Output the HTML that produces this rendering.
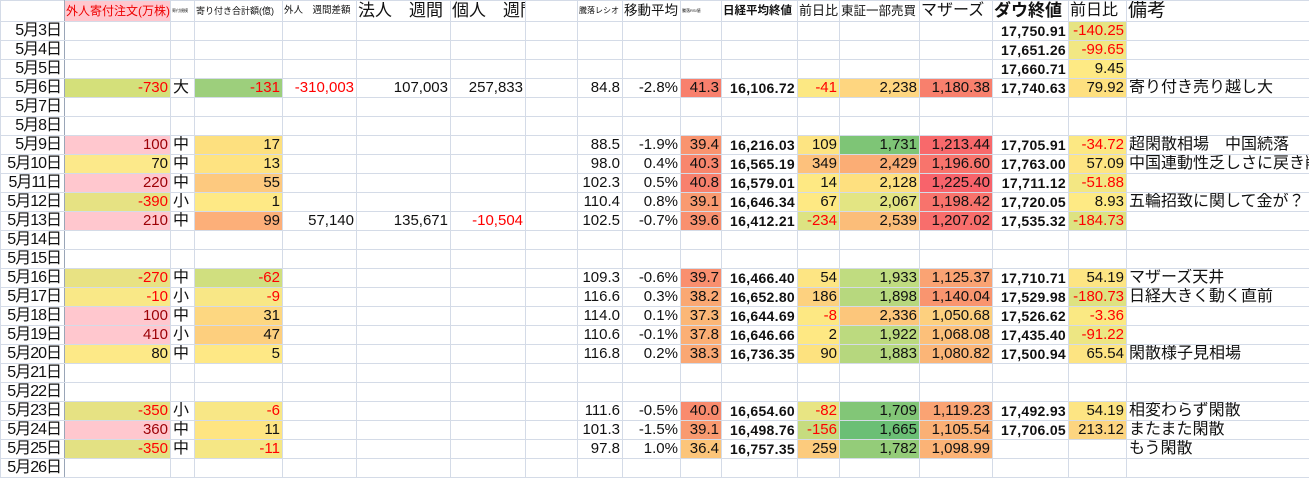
<!DOCTYPE html>
<html><head><meta charset="utf-8"><style>
body{margin:0;background:#fff;width:1309px;height:473px;overflow:hidden;font-family:"Liberation Sans","Noto Sans CJK JP",sans-serif;}
table{border-collapse:collapse;table-layout:fixed;width:1309px;}
td{border:1px solid #d4dbe7;padding:0 2px;height:18px;line-height:18px;font-size:15px;white-space:nowrap;overflow:hidden;text-align:right;color:#111;}
tr.h td{height:20px;text-align:left;font-size:12px;padding:0 1px;}
td.dt{border-right:1px solid #9aa6b8;font-size:16px;letter-spacing:-1px;padding-right:3px;}
.r{color:#f00}.d{color:#9c0006}.b{font-weight:bold;font-size:14px;letter-spacing:0.3px}
td.l{text-align:left;font-size:16px}
td.c{text-align:left;font-size:16px;padding-left:2px}
</style></head><body>
<table>
<colgroup><col style="width:64px"><col style="width:106px"><col style="width:24px"><col style="width:88px"><col style="width:74px"><col style="width:94px"><col style="width:75px"><col style="width:52px"><col style="width:45px"><col style="width:58px"><col style="width:41px"><col style="width:76px"><col style="width:42px"><col style="width:80px"><col style="width:73px"><col style="width:76px"><col style="width:58px"><col style="width:183px"></colgroup>
<tr class="h"><td class="dt"></td><td style="background:#ffc7ce;color:#e00">外人寄付注文(万株)</td><td style="font-size:4px">寄付規模</td><td style="font-size:9px">寄り付き合計額(億)</td><td style="font-size:9.5px">外人　週間差額</td><td style="font-size:17px">法人　週間</td><td style="font-size:17px">個人　週間</td><td></td><td style="font-size:8px">騰落レシオ</td><td style="font-size:13.5px">移動平均</td><td style="font-size:4px">騰落RSI値</td><td style="font-size:11.5px;font-weight:bold">日経平均終値</td><td style="font-size:13px">前日比</td><td style="font-size:12.5px">東証一部売買</td><td style="font-size:16px">マザーズ</td><td style="font-size:17px;font-weight:bold">ダウ終値</td><td style="font-size:16px">前日比</td><td style="font-size:19px">備考</td></tr>
<tr><td class="dt">5月3日</td><td></td><td></td><td></td><td></td><td></td><td></td><td></td><td></td><td></td><td></td><td></td><td></td><td></td><td></td><td class="b">17,750.91</td><td class="r" style="background:#e6e483">-140.25</td><td></td></tr>
<tr><td class="dt">5月4日</td><td></td><td></td><td></td><td></td><td></td><td></td><td></td><td></td><td></td><td></td><td></td><td></td><td></td><td></td><td class="b">17,651.26</td><td class="r" style="background:#f2e783">-99.65</td><td></td></tr>
<tr><td class="dt">5月5日</td><td></td><td></td><td></td><td></td><td></td><td></td><td></td><td></td><td></td><td></td><td></td><td></td><td></td><td></td><td class="b">17,660.71</td><td style="background:#feea84">9.45</td><td></td></tr>
<tr><td class="dt">5月6日</td><td class="r" style="background:#d4e07a">-730</td><td class="c">大</td><td class="r" style="background:#9dcf7c">-131</td><td class="r">-310,003</td><td>107,003</td><td>257,833</td><td></td><td>84.8</td><td>-2.8%</td><td style="background:#f8806d">41.3</td><td class="b">16,106.72</td><td class="r" style="background:#fce883">-41</td><td style="background:#fed680">2,238</td><td style="background:#f8806d">1,180.38</td><td class="b">17,740.63</td><td style="background:#fee07f">79.92</td><td class="l">寄り付き売り越し大</td></tr>
<tr><td class="dt">5月7日</td><td></td><td></td><td></td><td></td><td></td><td></td><td></td><td></td><td></td><td></td><td></td><td></td><td></td><td></td><td></td><td></td><td></td></tr>
<tr><td class="dt">5月8日</td><td></td><td></td><td></td><td></td><td></td><td></td><td></td><td></td><td></td><td></td><td></td><td></td><td></td><td></td><td></td><td></td><td></td></tr>
<tr><td class="dt">5月9日</td><td class="d" style="background:#ffc7ce">100</td><td class="c">中</td><td style="background:#fde07f">17</td><td></td><td></td><td></td><td></td><td>88.5</td><td>-1.9%</td><td style="background:#f9946f">39.4</td><td class="b">16,216.03</td><td style="background:#fde482">109</td><td style="background:#7ec576">1,731</td><td style="background:#f8696b">1,213.44</td><td class="b">17,705.91</td><td class="r" style="background:#fce883">-34.72</td><td class="l">超閑散相場　中国続落</td></tr>
<tr><td class="dt">5月10日</td><td style="background:#fce98a">70</td><td class="c">中</td><td style="background:#fee381">13</td><td></td><td></td><td></td><td></td><td>98.0</td><td>0.4%</td><td style="background:#f8866d">40.3</td><td class="b">16,565.19</td><td style="background:#fdc17c">349</td><td style="background:#fbad75">2,429</td><td style="background:#f8746c">1,196.60</td><td class="b">17,763.00</td><td style="background:#fee583">57.09</td><td class="l">中国連動性乏しさに戻き削除</td></tr>
<tr><td class="dt">5月11日</td><td class="d" style="background:#ffc7ce">220</td><td class="c">中</td><td style="background:#fdc97f">55</td><td></td><td></td><td></td><td></td><td>102.3</td><td>0.5%</td><td style="background:#f8806d">40.8</td><td class="b">16,579.01</td><td style="background:#fee983">14</td><td style="background:#fee07f">2,128</td><td style="background:#f8636b">1,225.40</td><td class="b">17,711.12</td><td class="r" style="background:#f3e783">-51.88</td><td></td></tr>
<tr><td class="dt">5月12日</td><td class="r" style="background:#e6e283">-390</td><td class="c">小</td><td style="background:#fee985">1</td><td></td><td></td><td></td><td></td><td>110.4</td><td>0.8%</td><td style="background:#f99a70">39.1</td><td class="b">16,646.34</td><td style="background:#fee983">67</td><td style="background:#e3e583">2,067</td><td style="background:#f8736c">1,198.42</td><td class="b">17,720.05</td><td style="background:#feea84">8.93</td><td class="l">五輪招致に関して金が？</td></tr>
<tr><td class="dt">5月13日</td><td class="d" style="background:#ffc7ce">210</td><td class="c">中</td><td style="background:#fcaf79">99</td><td>57,140</td><td>135,671</td><td class="r">-10,504</td><td></td><td>102.5</td><td>-0.7%</td><td style="background:#f9906f">39.6</td><td class="b">16,412.21</td><td class="r" style="background:#dde382">-234</td><td style="background:#fbbd79">2,539</td><td style="background:#f86e6c">1,207.02</td><td class="b">17,535.32</td><td class="r" style="background:#dde281">-184.73</td><td></td></tr>
<tr><td class="dt">5月14日</td><td></td><td></td><td></td><td></td><td></td><td></td><td></td><td></td><td></td><td></td><td></td><td></td><td></td><td></td><td></td><td></td><td></td></tr>
<tr><td class="dt">5月15日</td><td></td><td></td><td></td><td></td><td></td><td></td><td></td><td></td><td></td><td></td><td></td><td></td><td></td><td></td><td></td><td></td><td></td></tr>
<tr><td class="dt">5月16日</td><td class="r" style="background:#e8e283">-270</td><td class="c">中</td><td class="r" style="background:#d0df7f">-62</td><td></td><td></td><td></td><td></td><td>109.3</td><td>-0.6%</td><td style="background:#f98f6f">39.7</td><td class="b">16,466.40</td><td style="background:#fde583">54</td><td style="background:#c0dc80">1,933</td><td style="background:#faa373">1,125.37</td><td class="b">17,710.71</td><td style="background:#fde583">54.19</td><td class="l">マザーズ天井</td></tr>
<tr><td class="dt">5月17日</td><td class="r" style="background:#f9e887">-10</td><td class="c">小</td><td class="r" style="background:#f8e786">-9</td><td></td><td></td><td></td><td></td><td>116.6</td><td>0.3%</td><td style="background:#faa873">38.2</td><td class="b">16,652.80</td><td style="background:#fdd17f">186</td><td style="background:#b7d87e">1,898</td><td style="background:#f9956f">1,140.04</td><td class="b">17,529.98</td><td class="r" style="background:#dee281">-180.73</td><td class="l">日経大きく動く直前</td></tr>
<tr><td class="dt">5月18日</td><td class="d" style="background:#ffc7ce">100</td><td class="c">中</td><td style="background:#fdd781">31</td><td></td><td></td><td></td><td></td><td>114.0</td><td>0.1%</td><td style="background:#fbb777">37.3</td><td class="b">16,644.69</td><td class="r" style="background:#fde883">-8</td><td style="background:#fcc67b">2,336</td><td style="background:#fdd07f">1,050.68</td><td class="b">17,526.62</td><td class="r" style="background:#fae983">-3.36</td><td></td></tr>
<tr><td class="dt">5月19日</td><td class="d" style="background:#ffc7ce">410</td><td class="c">小</td><td style="background:#fdcf7e">47</td><td></td><td></td><td></td><td></td><td>110.6</td><td>-0.1%</td><td style="background:#fbaf75">37.8</td><td class="b">16,646.66</td><td style="background:#fee883">2</td><td style="background:#bcda7f">1,922</td><td style="background:#fcc07a">1,068.08</td><td class="b">17,435.40</td><td class="r" style="background:#ede683">-91.22</td><td></td></tr>
<tr><td class="dt">5月20日</td><td style="background:#fde987">80</td><td class="c">中</td><td style="background:#fee885">5</td><td></td><td></td><td></td><td></td><td>116.8</td><td>0.2%</td><td style="background:#faa773">38.3</td><td class="b">16,736.35</td><td style="background:#fde27f">90</td><td style="background:#b6d77e">1,883</td><td style="background:#fbb577">1,080.82</td><td class="b">17,500.94</td><td style="background:#fde482">65.54</td><td class="l">閑散様子見相場</td></tr>
<tr><td class="dt">5月21日</td><td></td><td></td><td></td><td></td><td></td><td></td><td></td><td></td><td></td><td></td><td></td><td></td><td></td><td></td><td></td><td></td><td></td></tr>
<tr><td class="dt">5月22日</td><td></td><td></td><td></td><td></td><td></td><td></td><td></td><td></td><td></td><td></td><td></td><td></td><td></td><td></td><td></td><td></td><td></td></tr>
<tr><td class="dt">5月23日</td><td class="r" style="background:#e6e283">-350</td><td class="c">小</td><td class="r" style="background:#f8e786">-6</td><td></td><td></td><td></td><td></td><td>111.6</td><td>-0.5%</td><td style="background:#f98b6e">40.0</td><td class="b">16,654.60</td><td class="r" style="background:#e8e583">-82</td><td style="background:#82c677">1,709</td><td style="background:#faa373">1,119.23</td><td class="b">17,492.93</td><td style="background:#fde583">54.19</td><td class="l">相変わらず閑散</td></tr>
<tr><td class="dt">5月24日</td><td class="d" style="background:#ffc7ce">360</td><td class="c">中</td><td style="background:#fee582">11</td><td></td><td></td><td></td><td></td><td>101.3</td><td>-1.5%</td><td style="background:#f99a70">39.1</td><td class="b">16,498.76</td><td class="r" style="background:#c6dc7f">-156</td><td style="background:#6bbf75">1,665</td><td style="background:#fab075">1,105.54</td><td class="b">17,706.05</td><td style="background:#fdd580">213.12</td><td class="l">またまた閑散</td></tr>
<tr><td class="dt">5月25日</td><td class="r" style="background:#e3e183">-350</td><td class="c">中</td><td class="r" style="background:#f5e785">-11</td><td></td><td></td><td></td><td></td><td>97.8</td><td>1.0%</td><td style="background:#fcc57a">36.4</td><td class="b">16,757.35</td><td style="background:#fccb7d">259</td><td style="background:#94cc79">1,782</td><td style="background:#fbb376">1,098.99</td><td></td><td></td><td class="l">もう閑散</td></tr>
<tr><td class="dt">5月26日</td><td></td><td></td><td></td><td></td><td></td><td></td><td></td><td></td><td></td><td></td><td></td><td></td><td></td><td></td><td></td><td></td><td></td></tr>
</table>
</body></html>
